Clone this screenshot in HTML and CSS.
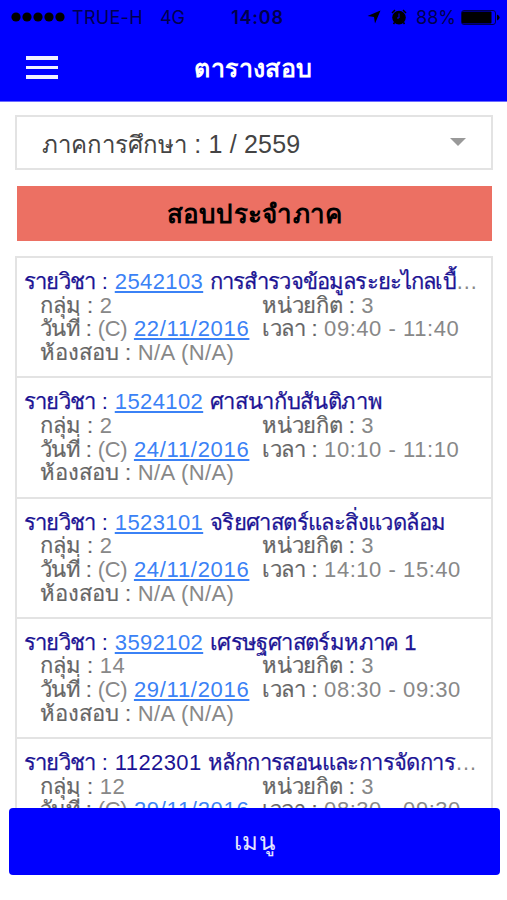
FILE: index.html
```html
<!DOCTYPE html>
<html lang="th">
<head>
    <meta charset="UTF-8">
    <meta name="viewport" content="width=device-width, initial-scale=1.0">
    <title>ตารางสอบ</title>
    <link rel="stylesheet" href="styles.css">
</head>
<body>
<div class="app">
  <!-- Header -->
  <header class="header">
    <div class="status-bar">
      <div class="status-left">
        <svg class="signal" width="54" height="10" viewBox="0 0 54 10">
          <circle cx="5" cy="5" r="4.6"/><circle cx="16" cy="5" r="4.6"/><circle cx="27" cy="5" r="4.6"/><circle cx="38" cy="5" r="4.6"/><circle cx="49" cy="5" r="4.6"/>
        </svg>
        <span class="carrier">TRUE-H</span>
        <span class="network">4G</span>
      </div>
      <div class="clock">14:08</div>
      <div class="status-right">
        <svg class="location" width="14" height="14" viewBox="0 0 14 14"><path d="M13.5 0.5L8 13.5L7 7L0.5 6Z"/></svg>
        <svg class="alarm" width="16" height="16" viewBox="0 0 16 16">
          <circle cx="8" cy="8.6" r="6.8"/>
          <path class="alarm-bell" d="M1 4L4 1M15 4L12 1M3.5 13.5L2.5 15M12.5 13.5L13.5 15"/>
          <path class="alarm-hand" d="M8 4.5V9H6"/>
        </svg>
        <span class="percent">88%</span>
        <svg class="battery" width="39" height="15" viewBox="0 0 39 15">
          <rect class="battery-case" x="0.5" y="0.5" width="34" height="14" rx="2.5"/>
          <rect x="1" y="1.5" width="29.5" height="12" rx="1"/>
          <path d="M36 4.5Q38.6 5.5 38.6 7.5Q38.6 9.5 36 10.5Z"/>
        </svg>
      </div>
    </div>
    <div class="nav-bar">
      <button class="nav-toggle" aria-label="Menu"><span></span><span></span><span></span></button>
      <h1 class="nav-title">ตารางสอบ</h1>
    </div>
  </header>

  <!-- Exam list -->
  <main class="content">
    <div class="term-select">
      <span class="term-text"><span class="term-label">ภาคการศึกษา</span> : 1 / 2559</span>
      <span class="caret"></span>
    </div>
    <h2 class="exam-type">สอบประจำภาค</h2>

    <ul class="exam-list">
      <li class="exam">
        <h3 class="exam-title"><b><span class="key">รายวิชา</span> : <a class="code" href="#">2542103</a> <span class="subject subject-long">การสำรวจข้อมูลระยะไกลเบื้</span></b>…</h3>
        <div class="exam-row"><span><i class="group">กลุ่ม :</i> 2</span><span><i class="credit">หน่วยกิต :</i> 3</span></div>
        <div class="exam-row"><span><i class="date">วันที่ :</i> <span class="mark">(C)</span> <a href="#">22/11/2016</a></span><span class="hours"><i class="time">เวลา :</i> 09:40 - 11:40</span></div>
        <div class="exam-row"><span><i class="room">ห้องสอบ :</i> N/A (N/A)</span></div>
      </li>
      <li class="exam">
        <h3 class="exam-title"><b><span class="key">รายวิชา</span> : <a class="code" href="#">1524102</a> <span class="subject subject-short">ศาสนากับสันติภาพ</span></b></h3>
        <div class="exam-row"><span><i class="group">กลุ่ม :</i> 2</span><span><i class="credit">หน่วยกิต :</i> 3</span></div>
        <div class="exam-row"><span><i class="date">วันที่ :</i> <span class="mark">(C)</span> <a href="#">24/11/2016</a></span><span class="hours"><i class="time">เวลา :</i> 10:10 - 11:10</span></div>
        <div class="exam-row"><span><i class="room">ห้องสอบ :</i> N/A (N/A)</span></div>
      </li>
      <li class="exam">
        <h3 class="exam-title"><b><span class="key">รายวิชา</span> : <a class="code" href="#">1523101</a> <span class="subject">จริยศาสตร์และสิ่งแวดล้อม</span></b></h3>
        <div class="exam-row"><span><i class="group">กลุ่ม :</i> 2</span><span><i class="credit">หน่วยกิต :</i> 3</span></div>
        <div class="exam-row"><span><i class="date">วันที่ :</i> <span class="mark">(C)</span> <a href="#">24/11/2016</a></span><span class="hours"><i class="time">เวลา :</i> 14:10 - 15:40</span></div>
        <div class="exam-row"><span><i class="room">ห้องสอบ :</i> N/A (N/A)</span></div>
      </li>
      <li class="exam">
        <h3 class="exam-title"><b><span class="key">รายวิชา</span> : <a class="code" href="#">3592102</a> <span class="subject">เศรษฐศาสตร์มหภาค 1</span></b></h3>
        <div class="exam-row"><span><i class="group">กลุ่ม :</i> 14</span><span><i class="credit">หน่วยกิต :</i> 3</span></div>
        <div class="exam-row"><span><i class="date">วันที่ :</i> <span class="mark">(C)</span> <a href="#">29/11/2016</a></span><span class="hours"><i class="time">เวลา :</i> 08:30 - 09:30</span></div>
        <div class="exam-row"><span><i class="room">ห้องสอบ :</i> N/A (N/A)</span></div>
      </li>
      <li class="exam">
        <h3 class="exam-title"><b><span class="key">รายวิชา</span> : <span class="code">1122301</span> <span class="subject">หลักการสอนและการจัดการ</span></b>…</h3>
        <div class="exam-row"><span><i class="group">กลุ่ม :</i> 12</span><span><i class="credit">หน่วยกิต :</i> 3</span></div>
        <div class="exam-row"><span><i class="date">วันที่ :</i> <span class="mark">(C)</span> <a href="#">29/11/2016</a></span><span class="hours"><i class="time">เวลา :</i> 08:30 - 09:30</span></div>
      </li>
    </ul>
  </main>

  <!-- Bottom menu -->
  <footer class="footer">
    <button class="menu-btn">เมนู</button>
  </footer>
</div>
</body>
</html>
```
FILE: styles.css
```css
* {
  box-sizing: border-box;
  margin: 0;
  padding: 0;
}

body {
  font-family: "Liberation Sans", Arial, sans-serif;
  background-color: #fff;
  overflow: hidden;
}

.app {
  display: flex;
  flex-direction: column;
  height: 900px;
}

/* Header */

.header {
  flex: none;
  height: 102px;
  background-color: #0000ff;
  border-bottom: 1px solid #6c6cff;
}

.status-bar {
  display: grid;
  grid-template-columns: 1fr auto 1fr;
  align-items: center;
  height: 34px;
  padding: 0 7px 0 11px;
  font-family: Inter, sans-serif;
  font-size: 18px;
  color: #00004d;
}

.status-left,
.status-right {
  display: flex;
  align-items: center;
}

.status-right {
  justify-content: flex-end;
}

.carrier {
  margin-left: 7px;
  letter-spacing: 0.3px;
}

.network {
  margin-left: 17px;
}

.clock {
  margin-left: 4px;
  font-weight: 600;
  letter-spacing: 0.8px;
}

.location {
  margin-right: 10px;
}

.alarm {
  margin-right: 9px;
}

.alarm-bell {
  stroke: #000;
  stroke-width: 1.5;
}

.alarm-hand {
  fill: none;
  stroke: #0000ff;
  stroke-width: 1;
}

.percent {
  margin-right: 5px;
}

.battery-case {
  fill: none;
  stroke: #00004d;
}

.nav-bar {
  display: grid;
  grid-template-columns: 60px 1fr 60px;
  align-items: center;
  height: 67px;
}

.nav-toggle {
  display: flex;
  flex-direction: column;
  gap: 6px;
  width: 32px;
  margin-left: 26px;
  background: none;
  border: none;
}

.nav-toggle span {
  height: 3.5px;
  background-color: #f0f0ff;
}

.nav-title {
  font-size: 25px;
  font-weight: bold;
  line-height: 30px;
  letter-spacing: 0.4px;
  text-align: center;
  color: #fff;
}

/* Content */

.content {
  flex: 1;
  min-height: 0;
  padding: 13px 14px 0 15px;
  overflow: hidden;
}

.term-select {
  display: flex;
  align-items: center;
  justify-content: space-between;
  height: 55px;
  padding: 3px 25px 0 25px;
  border: 2px solid #e3e3e3;
  font-size: 25px;
  letter-spacing: 0.2px;
  color: #444;
}

.term-label {
  font-size: 24px;
  letter-spacing: 0;
}

.caret {
  margin-bottom: 5px;
  border: 8px solid transparent;
  border-top-color: #999;
  border-bottom: none;
}

.exam-type {
  height: 55px;
  margin: 16px 1px 15px 2px;
  background-color: #ec7063;
  font-size: 26px;
  line-height: 57px;
  letter-spacing: 0.3px;
  text-align: center;
  color: #000;
}

.exam-list {
  list-style: none;
  border: 2px solid #e3e3e3;
}

.exam {
  height: 120.3px;
  padding: 12px 14px 0 7px;
  border-bottom: 2px solid #e3e3e3;
  font-size: 22px;
  letter-spacing: 0.4px;
  color: #888;
}

.exam-title {
  height: 23.5px;
  font-size: 22px;
  font-weight: normal;
  line-height: 23.5px;
  white-space: nowrap;
}

.exam-title b {
  font-weight: normal;
  color: #1c1494;
}

.key {
  letter-spacing: -0.8px;
}

.key,
.subject {
  -webkit-text-stroke: 0.25px #1c1494;
}

.subject {
  letter-spacing: -0.6px;
}

.subject-long {
  letter-spacing: -0.85px;
}

.subject-short {
  letter-spacing: -0.35px;
}

.exam a {
  color: #3b82f6;
  text-decoration: underline;
}

.exam-row {
  display: grid;
  grid-template-columns: 222px 1fr;
  height: 23.8px;
  padding-left: 16px;
  line-height: 23.8px;
  white-space: nowrap;
}

.exam-row a {
  letter-spacing: 0.7px;
}

.exam-row i {
  font-style: normal;
  letter-spacing: 0;
  color: #666;
  -webkit-text-stroke: 0.2px #666;
}

.exam-row .date {
  letter-spacing: -0.6px;
}

.exam-row .credit {
  letter-spacing: -0.2px;
}

.exam-row .time {
  letter-spacing: -0.3px;
}

.hours {
  letter-spacing: 0.55px;
}

.mark {
  letter-spacing: -0.3px;
}

/* Bottom menu */

.footer {
  flex: none;
  height: 92px;
  padding: 0 7px 0 9px;
}

.menu-btn {
  display: block;
  width: 100%;
  height: 67px;
  background-color: #0000ff;
  border: none;
  border-radius: 4px;
  font-family: inherit;
  font-size: 24px;
  letter-spacing: 0.4px;
  color: #e4e4ff;
}
```
